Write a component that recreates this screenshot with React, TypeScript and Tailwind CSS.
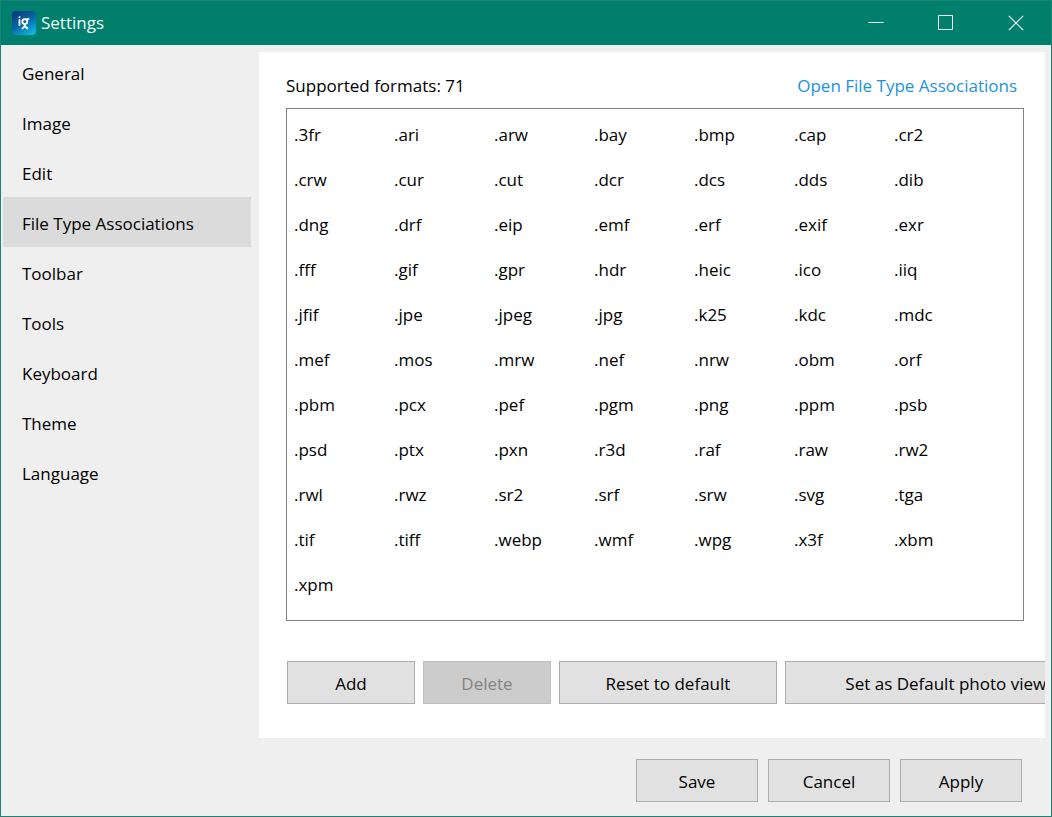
import { useState } from 'react';
import type { ReactNode } from 'react';

const SECTIONS = [
  'General',
  'Image',
  'Edit',
  'File Type Associations',
  'Toolbar',
  'Tools',
  'Keyboard',
  'Theme',
  'Language',
];

const FORMATS = (
  '.3fr .ari .arw .bay .bmp .cap .cr2 ' +
  '.crw .cur .cut .dcr .dcs .dds .dib ' +
  '.dng .drf .eip .emf .erf .exif .exr ' +
  '.fff .gif .gpr .hdr .heic .ico .iiq ' +
  '.jfif .jpe .jpeg .jpg .k25 .kdc .mdc ' +
  '.mef .mos .mrw .nef .nrw .obm .orf ' +
  '.pbm .pcx .pef .pgm .png .ppm .psb ' +
  '.psd .ptx .pxn .r3d .raf .raw .rw2 ' +
  '.rwl .rwz .sr2 .srf .srw .svg .tga ' +
  '.tif .tiff .webp .wmf .wpg .x3f .xbm ' +
  '.xpm'
).split(' ');

function AppLogo() {
  return (
    <svg width="24" height="24" viewBox="0 0 24 24" aria-hidden="true">
      <defs>
        <linearGradient id="logo" x1="0.2" y1="0" x2="0.8" y2="1">
          <stop offset="0" stopColor="#0b3a7c" />
          <stop offset="0.5" stopColor="#0668a8" />
          <stop offset="1" stopColor="#0cbbe4" />
        </linearGradient>
      </defs>
      <rect width="24" height="24" rx="4" fill="url(#logo)" />
      <g fill="none" stroke="#ffffff" strokeWidth="1.8" strokeLinecap="round">
        <path d="M7.5 9v5" />
        <path d="M7.5 6.2v.1" />
        <circle cx="12.8" cy="10.6" r="2.5" />
        <path d="M14.4 8.6c.6-.5 1.2-.7 2.2-.7" />
        <path d="M12.8 13.2v1.8M12.8 15l-2.4 2.5M12.8 15l2.6 2.5" />
      </g>
    </svg>
  );
}

function CaptionButton({ label, children }: { label: string; children: ReactNode }) {
  return (
    <button
      type="button"
      aria-label={label}
      className="flex h-11 w-[70px] items-center justify-center hover:bg-white/10"
    >
      <svg width="16" height="16" viewBox="0 0 16 16" fill="none" stroke="#f2faf8" aria-hidden="true">
        {children}
      </svg>
    </button>
  );
}

function PushButton({
  children,
  size,
  disabled = false,
}: {
  children: ReactNode;
  size: string;
  disabled?: boolean;
}) {
  return (
    <button
      type="button"
      disabled={disabled}
      className={`h-[43px] shrink-0 whitespace-nowrap border border-[#adadad] bg-[#e1e1e1] pt-[2px] hover:border-[#0078d7] hover:bg-[#e5f1fb] disabled:border-[#bfbfbf] disabled:bg-[#cccccc] disabled:text-[#838383] ${size}`}
    >
      {children}
    </button>
  );
}

export default function App() {
  const [section, setSection] = useState('File Type Associations');

  return (
    <div className="flex min-h-screen flex-col border border-[#1c8474] bg-[#efefef] font-['Open_Sans','Noto_Sans',sans-serif] text-[17px] leading-6 text-black">
      <header className="flex h-11 items-center bg-[#007f6d] pl-[11px] text-[#f2faf8]">
        <AppLogo />
        <h1 className="grow pl-[5px]">Settings</h1>
        <CaptionButton label="Minimize">
          <path d="M.5 7.5h15" />
        </CaptionButton>
        <CaptionButton label="Maximize">
          <path d="M.5 .5h14v14h-14z" />
        </CaptionButton>
        <CaptionButton label="Close">
          <path d="M.8 .8l14.4 14.4M15.2 .8L.8 15.2" strokeWidth="1.2" />
        </CaptionButton>
      </header>

      <div className="flex grow">
        <nav aria-label="Settings sections" className="w-[250px] shrink-0 pl-[2px] pt-[2px]">
          <ul>
            {SECTIONS.map((name) => (
              <li key={name}>
                <button
                  type="button"
                  aria-current={name === section ? 'page' : undefined}
                  onClick={() => setSection(name)}
                  className="h-[50px] w-full pl-[19px] pt-[3px] text-left aria-[current=page]:bg-[#dbdbdb]"
                >
                  {name}
                </button>
              </li>
            ))}
          </ul>
        </nav>

        <main className="ml-2 mr-[6px] mt-[7px] flex min-w-0 grow flex-col">
          <section className="grow overflow-hidden bg-white pb-[34px] pl-[27px] pt-[22px]">
            <div className="mr-[21px]">
              <div className="flex justify-between pr-[7px]">
                <h2 id="formats">Supported formats: {FORMATS.length}</h2>
                <a href="#associations" className="text-[#1b93dc]">
                  Open File Type Associations
                </a>
              </div>
              <ul
                aria-labelledby="formats"
                className="mt-[10px] grid grid-cols-[repeat(auto-fill,100px)] border border-[#828282] pb-[13px] pl-[7px] pt-[3px]"
              >
                {FORMATS.map((ext) => (
                  <li key={ext} className="flex h-[45px] items-center">
                    {ext}
                  </li>
                ))}
              </ul>
            </div>
            <div className="mt-10 flex gap-2 pl-px">
              <PushButton size="w-32">Add</PushButton>
              <PushButton size="w-32" disabled>
                Delete
              </PushButton>
              <PushButton size="w-[218px]">Reset to default</PushButton>
              <PushButton size="w-[338px]">Set as Default photo viewer</PushButton>
            </div>
          </section>

          <footer className="flex justify-end gap-[10px] pb-[14px] pr-[23px] pt-[21px]">
            <PushButton size="w-[122px]">Save</PushButton>
            <PushButton size="w-[122px]">Cancel</PushButton>
            <PushButton size="w-[122px]">Apply</PushButton>
          </footer>
        </main>
      </div>
    </div>
  );
}
